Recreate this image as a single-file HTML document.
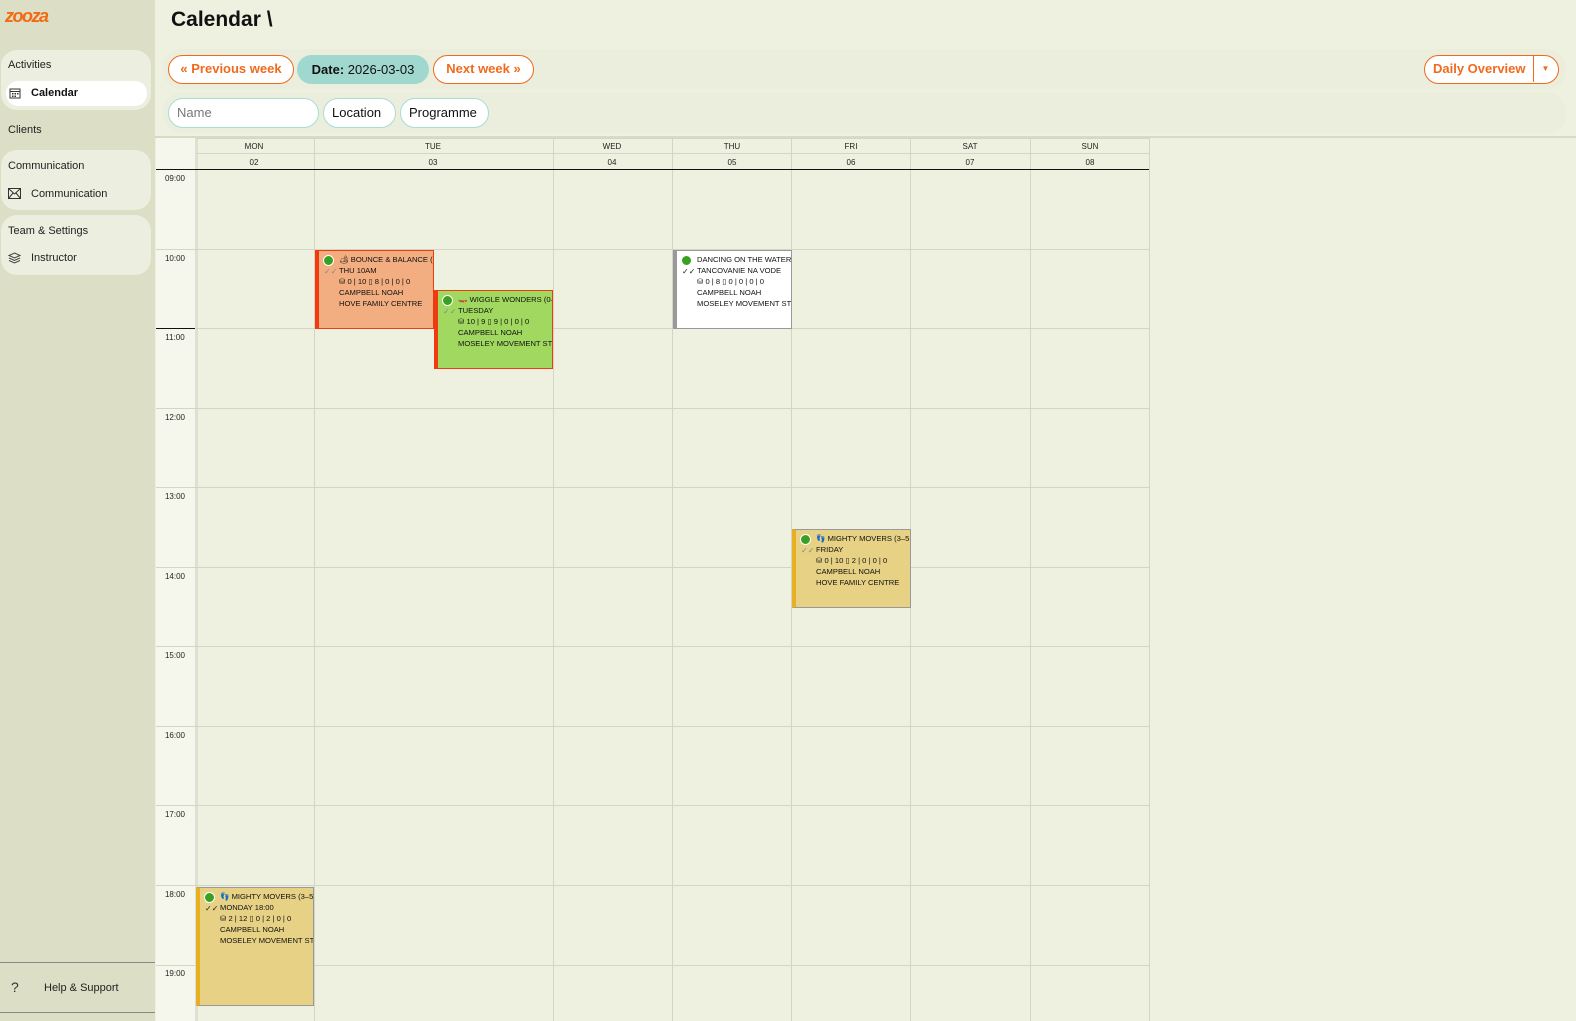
<!DOCTYPE html>
<html><head><meta charset="utf-8"><style>
*{box-sizing:border-box;margin:0;padding:0}
body{width:1576px;height:1021px;overflow:hidden;background:#eff1e0;font-family:"Liberation Sans",sans-serif;color:#111;position:relative}
.sb{position:absolute;left:0;top:0;width:155px;height:1021px;background:#dcdfc5}
.grp{position:absolute;left:1px;width:150px;background:#eceedf;border-radius:16px}
.lbl{position:absolute;left:8px;font-size:11px;color:#222}
.item{position:absolute;left:8px;font-size:11px;color:#222}
.ab{position:absolute}
.btn{position:absolute;height:29px;border:1.5px solid #f06a1e;border-radius:15px;background:#fff;color:#f06a1e;font-weight:bold;font-size:13px;line-height:26px;text-align:center}
.pill{position:absolute;height:30px;border:1.5px solid #a8dcd4;border-radius:15px;background:#fff;font-size:13px;line-height:27px;padding-left:8px}
.grid{position:absolute;left:156px;top:138px;width:1420px;height:883px}
.ev{position:absolute;font-size:7.6px;line-height:11px;text-transform:uppercase;overflow:hidden;white-space:nowrap;border:1px solid;padding:3px 0 0 20px}
.ev .dot{position:absolute;left:4px;top:4px;width:11px;height:11px;border-radius:50%;background:#3aa022;border:1.5px solid #fff}
.ev .ck{position:absolute;left:5px;top:15px;font-size:8px;color:#888}
</style></head><body>
<div class="sb">
 <div class="ab" style="left:5px;top:6px;width:48px;height:20px;color:#f26a12;font-weight:900;font-size:18px;font-style:italic;letter-spacing:-1.5px;line-height:20px">zooza</div>
 <div class="grp" style="top:50px;height:60px"></div>
 <div class="lbl" style="top:59px">Activities</div>
 <div class="ab" style="left:6px;top:81px;width:141px;height:25px;background:#fff;border-radius:12px"></div>
 <svg class="ab" style="left:9px;top:87px" width="12" height="12" viewBox="0 0 12 12"><rect x="1" y="2" width="10" height="9" fill="none" stroke="#333"/><line x1="1" y1="4.5" x2="11" y2="4.5" stroke="#333"/><rect x="3" y="6" width="1.5" height="1.5" fill="#333"/><rect x="5.5" y="6" width="1.5" height="1.5" fill="#333"/><rect x="8" y="6" width="1.5" height="1.5" fill="#333"/><rect x="3" y="8.5" width="1.5" height="1.5" fill="#333"/><rect x="5.5" y="8.5" width="1.5" height="1.5" fill="#333"/></svg>
 <div class="ab" style="left:31px;top:87px;font-size:11px;font-weight:bold">Calendar</div>
 <div class="lbl" style="top:124px">Clients</div>
 <div class="grp" style="top:150px;height:60px"></div>
 <div class="lbl" style="top:160px">Communication</div>
 <svg class="ab" style="left:8px;top:188px" width="13" height="11" viewBox="0 0 13 11"><rect x="0.5" y="0.5" width="12" height="10" fill="none" stroke="#333"/><path d="M0.5 0.5 L6.5 6 L12.5 0.5 M0.5 10.5 L5 5 M12.5 10.5 L8 5" fill="none" stroke="#333"/></svg>
 <div class="item" style="left:31px;top:188px">Communication</div>
 <div class="grp" style="top:215px;height:60px"></div>
 <div class="lbl" style="top:225px">Team &amp; Settings</div>
 <svg class="ab" style="left:8px;top:252px" width="13" height="12" viewBox="0 0 13 12"><path d="M6.5 1 L12 3.5 L6.5 6 L1 3.5 Z M1 6 L6.5 8.5 L12 6 M1 8.5 L6.5 11 L12 8.5" fill="none" stroke="#444"/></svg>
 <div class="item" style="left:31px;top:252px">Instructor</div>
 <div class="ab" style="left:0;top:962px;width:155px;border-top:1px solid #888"></div>
 <div class="ab" style="left:11px;top:979px;font-size:14px;color:#333">?</div>
 <div class="item" style="left:44px;top:982px">Help &amp; Support</div>
 <div class="ab" style="left:0;top:1012px;width:155px;border-top:1px solid #888"></div>
</div>

<div class="ab" style="left:171px;top:8px;font-size:21px;font-weight:bold">Calendar \</div>
<div class="ab" style="left:163px;top:49px;width:1403px;height:40px;border-radius:18px;background:#ebeedc"></div>
<div class="ab" style="left:163px;top:93px;width:1403px;height:40px;border-radius:18px;background:#ebeedc"></div>
<div class="btn" style="left:168px;top:55px;width:126px">« Previous week</div>
<div class="ab" style="left:297px;top:55px;width:132px;height:29px;border-radius:15px;background:#a0d8d0;font-size:13px;line-height:29px;text-align:center"><b>Date:</b> 2026-03-03</div>
<div class="btn" style="left:433px;top:55px;width:101px">Next week »</div>
<div class="btn" style="left:1424px;top:55px;width:135px;text-align:left;padding-left:8px">Daily Overview<span style="position:absolute;left:108px;top:0;height:26px;border-left:1.5px solid #f06a1e;width:24px;text-align:center;font-size:8px">▼</span></div>
<div class="pill" style="left:168px;top:98px;width:151px;color:#777">Name</div>
<div class="pill" style="left:323px;top:98px;width:73px">Location</div>
<div class="pill" style="left:400px;top:98px;width:89px">Programme</div>
<div class="ab" style="left:155px;top:136px;width:1421px;border-top:2px solid #d8dac8"></div>

<div class="grid">
<svg width="1420" height="883" style="position:absolute;left:0;top:0" font-family="Liberation Sans" font-size="8">
<rect x="0" y="0" width="39" height="883" fill="#f6f7ec"/>
<rect x="39" y="0" width="3" height="883" fill="#dfe1d0"/>
<g stroke="#d3d6c4" stroke-width="1">
<line x1="40" y1="15.5" x2="993" y2="15.5"/>
<line x1="40" y1="0.5" x2="993" y2="0.5"/>
<line x1="158.5" y1="0" x2="158.5" y2="883"/><line x1="397.5" y1="0" x2="397.5" y2="883"/><line x1="516.5" y1="0" x2="516.5" y2="883"/><line x1="635.5" y1="0" x2="635.5" y2="883"/><line x1="754.5" y1="0" x2="754.5" y2="883"/><line x1="874.5" y1="0" x2="874.5" y2="883"/><line x1="993.5" y1="0" x2="993.5" y2="883"/>
<line x1="0" y1="111.5" x2="993" y2="111.5"/><line x1="40" y1="190.5" x2="993" y2="190.5"/><line x1="0" y1="270.5" x2="993" y2="270.5"/><line x1="0" y1="349.5" x2="993" y2="349.5"/><line x1="0" y1="429.5" x2="993" y2="429.5"/><line x1="0" y1="508.5" x2="993" y2="508.5"/><line x1="0" y1="588.5" x2="993" y2="588.5"/><line x1="0" y1="667.5" x2="993" y2="667.5"/><line x1="0" y1="747.5" x2="993" y2="747.5"/><line x1="0" y1="827.5" x2="993" y2="827.5"/>
</g>
<line x1="0" y1="31.5" x2="993" y2="31.5" stroke="#111"/>
<line x1="0" y1="190.5" x2="39" y2="190.5" stroke="#111"/>
<g text-anchor="middle" fill="#222">
<text x="98" y="11">MON</text><text x="277" y="11">TUE</text><text x="456" y="11">WED</text><text x="576" y="11">THU</text><text x="695" y="11">FRI</text><text x="814" y="11">SAT</text><text x="934" y="11">SUN</text>
<text x="98" y="27">02</text><text x="277" y="27">03</text><text x="456" y="27">04</text><text x="576" y="27">05</text><text x="695" y="27">06</text><text x="814" y="27">07</text><text x="934" y="27">08</text>
</g>
<g text-anchor="middle" fill="#222">
<text x="19" y="43">09:00</text><text x="19" y="123">10:00</text><text x="19" y="202">11:00</text><text x="19" y="282">12:00</text><text x="19" y="361">13:00</text><text x="19" y="441">14:00</text><text x="19" y="520">15:00</text><text x="19" y="600">16:00</text><text x="19" y="679">17:00</text><text x="19" y="759">18:00</text><text x="19" y="838">19:00</text>
</g>
</svg>
</div>

<div class="ev" style="left:315px;top:250px;width:119px;height:79px;background:#f2ad80;border-color:#f03a10;border-left:4px solid #f03a10"><span class="dot"></span><span class="ck">✓✓</span>🏕 BOUNCE &amp; BALANCE (1<br>THU 10AM<br>⛁ 0 | 10 ▯ 8 | 0 | 0 | 0<br>CAMPBELL NOAH<br>HOVE FAMILY CENTRE</div>
<div class="ev" style="left:434px;top:290px;width:119px;height:79px;background:#a0d860;border-color:#f03a10;border-left:4px solid #f03a10"><span class="dot"></span><span class="ck">✓✓</span>🛶 WIGGLE WONDERS (0–<br>TUESDAY<br>⛁ 10 | 9 ▯ 9 | 0 | 0 | 0<br>CAMPBELL NOAH<br>MOSELEY MOVEMENT STU</div>
<div class="ev" style="left:673px;top:250px;width:119px;height:79px;background:#fff;border-color:#999;border-left:4px solid #999"><span class="dot"></span><span class="ck" style="color:#222">✓✓</span>DANCING ON THE WATER<br>TANCOVANIE NA VODE<br>⛁ 0 | 8 ▯ 0 | 0 | 0 | 0<br>CAMPBELL NOAH<br>MOSELEY MOVEMENT STU</div>
<div class="ev" style="left:792px;top:529px;width:119px;height:79px;background:#e6d184;border-color:#999;border-left:4px solid #e8b020"><span class="dot"></span><span class="ck">✓✓</span>👣 MIGHTY MOVERS (3–5<br>FRIDAY<br>⛁ 0 | 10 ▯ 2 | 0 | 0 | 0<br>CAMPBELL NOAH<br>HOVE FAMILY CENTRE</div>
<div class="ev" style="left:196px;top:887px;width:118px;height:119px;background:#e6d184;border-color:#999;border-left:4px solid #e8b020"><span class="dot"></span><span class="ck" style="color:#222">✓✓</span>👣 MIGHTY MOVERS (3–5<br>MONDAY 18:00<br>⛁ 2 | 12 ▯ 0 | 2 | 0 | 0<br>CAMPBELL NOAH<br>MOSELEY MOVEMENT STU</div>
</body></html>
